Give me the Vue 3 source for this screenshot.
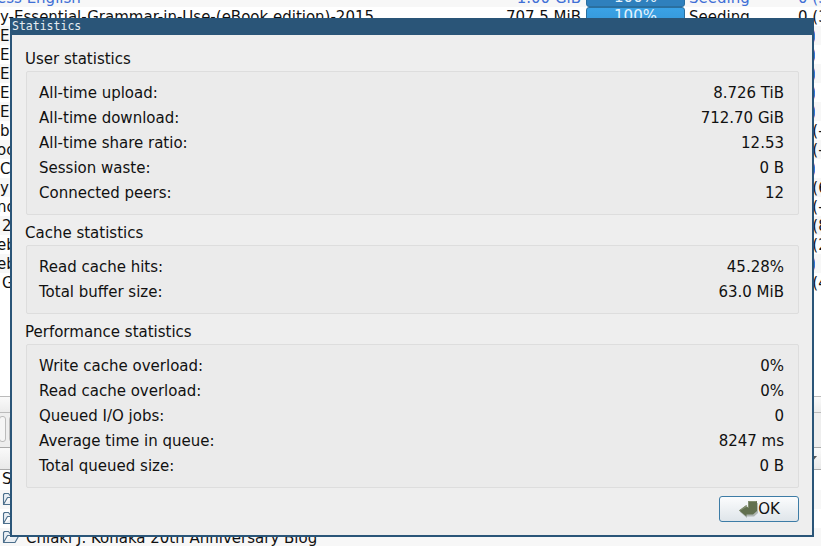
<script setup>
const torrents = [
  { name: 'ess English', size: '1.00 GiB', bar: 'dim', status: 'Seeding', peers: '0 (3', tone: 'link', cut: true },
  { name: 'y-Essential-Grammar-in-Use-(eBook edition)-2015', size: '707.5 MiB', bar: 'lit', status: 'Seeding', peers: '0 (3' },
  { name: 'Ex', peers: '0 (', sliver: true },
  { name: 'Ex', peers: '0 (', sliver: true },
  { name: 'Ex', peers: '0 (', sliver: true },
  { name: 'Ex', peers: '0 (', sliver: true },
  { name: 'Ex', peers: '0 (', sliver: true },
  { name: 'b', peers: '0 (-' },
  { name: 'oc', peers: '0 (-', cut: true },
  { name: 'Cl', peers: '0 (', sliver: true },
  { name: 'y', peers: '0 (6' },
  { name: 'no', peers: '0 (-', cut: true },
  { name: '2', peers: '0 (8', indent: true },
  { name: 'eb', peers: '0 (2', cut: true },
  { name: 'eb', peers: '0 (', sliver: true, cut: true },
  { name: 'G', peers: '0 (4', indent: true },
  {}, {}, {}, {}, {}, {}
]

const folders = [
  { name: '' },
  { name: '' },
  { name: 'Chiaki J. Konaka 20th Anniversary Blog' }
]

const groups = [
  {
    title: 'User statistics',
    rows: [
      ['All-time upload:', '8.726 TiB'],
      ['All-time download:', '712.70 GiB'],
      ['All-time share ratio:', '12.53'],
      ['Session waste:', '0 B'],
      ['Connected peers:', '12']
    ]
  },
  {
    title: 'Cache statistics',
    rows: [
      ['Read cache hits:', '45.28%'],
      ['Total buffer size:', '63.0 MiB']
    ]
  },
  {
    title: 'Performance statistics',
    rows: [
      ['Write cache overload:', '0%'],
      ['Read cache overload:', '0%'],
      ['Queued I/O jobs:', '0'],
      ['Average time in queue:', '8247 ms'],
      ['Total queued size:', '0 B']
    ]
  }
]
</script>

<template>
  <div class="desktop">
    <div class="main-window">
      <div class="transfer-list">
        <div class="transfer-rows">
          <div
            v-for="(t, i) in torrents"
            :key="i"
            class="transfer-row"
            :class="{ alt: i % 2 === 0 && i < 16, link: t.tone === 'link' }"
          >
            <span class="cell-name" :class="{ indent: t.indent, cut: t.cut }">{{ t.name }}</span>
            <span class="cell-size">{{ t.size }}</span>
            <span class="cell-bar">
              <span v-if="t.bar" class="progress" :class="t.bar">100%</span>
            </span>
            <span class="cell-status">{{ t.status }}</span>
            <span class="cell-peers" :class="{ sliver: t.sliver }">{{ t.peers }}</span>
          </div>
        </div>
      </div>

      <div class="splitter"></div>

      <div class="toolbar">
        <span class="tool-btn"></span>
        <span class="tool-btn"></span>
      </div>

      <div class="tab-header">
        <svg class="sort-arrow" width="12" height="6" viewBox="0 0 12 6">
          <path d="M1 0H11L6 6Z" fill="#555" />
        </svg>
      </div>

      <div class="files-head">S</div>
      <div
        v-for="(f, i) in folders"
        :key="i"
        class="file-row"
        :class="{ alt: i % 2 === 0 }"
      >
        <svg class="folder" width="18" height="14" viewBox="0 0 18 14">
          <path
            d="M1.5 12.5V2.5L2.5 1.5H6.5L8 3.5H12.5V5.5H5.5L1.5 12.5H13L17 5.5H12.5"
            fill="#e9eef3"
            stroke="#4c6f8c"
            stroke-width="1.1"
            stroke-linejoin="round"
          />
        </svg>
        <span class="file-name">{{ f.name }}</span>
      </div>
    </div>

    <div class="dialog">
      <div class="titlebar">Statistics</div>
      <div class="dialog-body">
        <section v-for="g in groups" :key="g.title" class="group">
          <h3 class="group-title">{{ g.title }}</h3>
          <div class="group-box">
            <div v-for="r in g.rows" :key="r[0]" class="stat-row">
              <span>{{ r[0] }}</span>
              <span>{{ r[1] }}</span>
            </div>
          </div>
        </section>
        <div class="actions">
          <button class="ok-btn">
            <svg width="20" height="18" viewBox="0 0 20 18">
              <path d="M2 12 L9 7 V9 H11 V3 H20 V13 L16 16.5 H9 V18 Z" fill="#2f3a28" opacity="0.3" />
              <path d="M1 10.5 L8.5 5 V7 H10 V1 H19 V11 L15 14.5 H8.5 V16.5 Z" fill="#62704f" />
              <path d="M10 7 V1 H19 L18 2 H11 V8 H9.5 V6.5 L2.5 10.5 L1 10.5 L8.5 5 V7 Z" fill="#838f70" />
            </svg>
            <span>OK</span>
          </button>
        </div>
      </div>
    </div>
  </div>
</template>

<style>
html,
body {
  margin: 0;
  overflow: hidden;
}
</style>

<style scoped>
.desktop {
  position: relative;
  width: 821px;
  height: 546px;
  overflow: hidden;
  background: #fff;
  font-family: "DejaVu Sans", sans-serif;
  font-size: 15px;
  color: #111;
}

.main-window {
  display: flex;
  flex-direction: column;
  height: 546px;
  overflow: hidden;
}

.transfer-list {
  height: 396px;
  flex: none;
  overflow: hidden;
}

.transfer-rows {
  margin-top: -12px;
}

.transfer-row {
  display: flex;
  align-items: center;
  height: 19px;
  background: #fff;
  white-space: nowrap;
}

.transfer-row.alt {
  background: #f7f7f7;
}

.transfer-row.link {
  color: #3f6fd6;
}

.cell-name {
  width: 480px;
  flex: none;
  box-sizing: border-box;
  overflow: hidden;
}

.cell-name.indent {
  padding-left: 2px;
}

.cell-name.cut {
  text-indent: -3px;
}

.cell-size {
  width: 101px;
  flex: none;
  text-align: right;
}

.cell-bar {
  width: 108px;
  flex: none;
  padding-left: 5px;
  box-sizing: border-box;
}

.progress {
  display: block;
  width: 99px;
  height: 19px;
  box-sizing: border-box;
  border: 1px solid #2a6f9f;
  border-radius: 3px;
  text-align: center;
  line-height: 17px;
  color: #e6f3fb;
}

.progress.dim {
  background: #2f80bd;
}

.progress.lit {
  background: linear-gradient(#3aa2e6, #3596d8);
}

.cell-status {
  width: 109px;
  flex: none;
}

.cell-peers {
  flex: none;
}

.cell-peers.sliver {
  width: 17px;
  overflow: hidden;
  color: #1f6fd0;
}

.splitter {
  height: 17px;
  flex: none;
  box-sizing: border-box;
  border-top: 1px solid #bbb;
  border-bottom: 1px solid #bbb;
  background: linear-gradient(#fafafa, #ececec);
}

.toolbar {
  height: 35px;
  flex: none;
  box-sizing: border-box;
  display: flex;
  gap: 3px;
  align-items: center;
  background: #eee;
  border-bottom: 1px solid #aaa;
  padding-bottom: 3px;
  margin-left: -1px;
}

.tool-btn {
  width: 5px;
  height: 24px;
  border: 1px solid #bbb;
  border-radius: 3px;
  background: #f5f5f5;
}

.tab-header {
  height: 22px;
  flex: none;
  box-sizing: border-box;
  display: flex;
  justify-content: flex-end;
  padding: 8px 2px 0 0;
  background: linear-gradient(#fafafa, #e9e9e9);
  border-bottom: 1px solid #aaa;
}

.sort-arrow {
  margin-right: 1px;
}

.files-head {
  height: 20px;
  flex: none;
  line-height: 19px;
  padding-left: 2px;
  background: #fff;
}

.file-row {
  height: 19px;
  flex: none;
  display: flex;
  align-items: center;
  background: #fff;
}

.file-row.alt {
  background: #f7f7f7;
}

.folder {
  margin-left: 2px;
  flex: none;
  margin-top: -2px;
}

.file-name {
  margin-left: 6px;
  white-space: nowrap;
}

.dialog {
  position: absolute;
  left: 10px;
  top: 18px;
  width: 804px;
  height: 519px;
  box-sizing: border-box;
  display: flex;
  flex-direction: column;
  border: 2px solid #2a5578;
  border-top: 0;
  background: #eee;
}

.titlebar {
  height: 17px;
  flex: none;
  background: #2a5578;
  color: #e6edf2;
  font-family: "DejaVu Sans Mono", monospace;
  font-size: 11.5px;
  line-height: 17px;
}

.dialog-body {
  flex: 1;
  padding: 6px 14px 0;
  margin-right: -1px;
  display: flex;
  flex-direction: column;
}

.group-title {
  margin: 0 0 0 -1px;
  height: 30px;
  font-size: 15px;
  font-weight: normal;
  line-height: 24px;
  padding-top: 6px;
  box-sizing: border-box;
}

.group-box {
  box-sizing: border-box;
  border: 1px solid #ddd;
  border-radius: 2px;
  background: #ebebeb;
  padding: 9px 14px 8px 12px;
}

.stat-row {
  display: flex;
  justify-content: space-between;
  height: 25px;
  line-height: 25px;
}

.actions {
  display: flex;
  justify-content: flex-end;
  margin-top: 8px;
}

.ok-btn {
  width: 80px;
  height: 26px;
  box-sizing: border-box;
  border: 1px solid #3d7ca6;
  border-radius: 3px;
  background: linear-gradient(#fbfcfd, #dfe5ea);
  padding: 0;
  display: flex;
  align-items: center;
  justify-content: center;
  font-family: inherit;
  font-size: 15px;
  color: #111;
}
</style>
